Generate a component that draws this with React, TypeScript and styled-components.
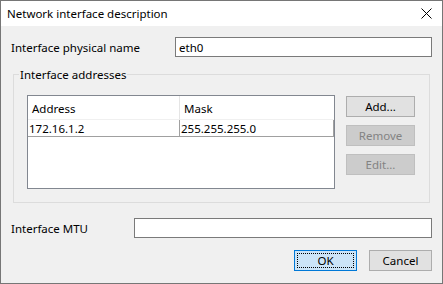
import styled, { createGlobalStyle } from "styled-components";

const GlobalStyle = createGlobalStyle`
    html, body {
        margin: 0;
        padding: 0;
        background: #f0f0f0;
    }
    * {
        box-sizing: border-box;
    }
`;

const Window = styled.div`
    width: 443px;
    height: 284px;
    border: 1px solid #767676;
    background: #f0f0f0;
    display: flex;
    flex-direction: column;
    font-family: "Noto Sans", "Open Sans", sans-serif;
    font-size: 11.5px;
    color: #000;
`;

const TitleBar = styled.div`
    height: 25px;
    background: #fff;
    display: flex;
    align-items: center;
    justify-content: space-between;
    padding: 0 10px 0 6px;
`;

const Title = styled.span`
    font-size: 11.5px;
`;

const Body = styled.div`
    flex: 1;
    display: flex;
    flex-direction: column;
    padding: 11px 10px 0 10px;
`;

const FieldRow = styled.div<{ $labelWidth: number; $top?: number }>`
    display: grid;
    grid-template-columns: ${(p) => p.$labelWidth}px 1fr;
    align-items: center;
    margin-top: ${(p) => p.$top ?? 0}px;
`;

const Label = styled.label``;

const TextInput = styled.input`
    height: 20px;
    border: 1px solid #7a7a7a;
    background: #fff;
    font: inherit;
    padding: 0 3px;
    outline: none;
`;

const Group = styled.fieldset`
    margin: 10px 2px 0 2px;
    border: 1px solid #dcdcdc;
    padding: 13px 13px 13px 13px;
    min-width: 0;
    display: flex;
    align-items: flex-start;
`;

const Legend = styled.legend`
    padding: 0 1px;
    margin-left: -8px;
`;

const ListView = styled.div`
    width: 308px;
    height: 94px;
    border: 1px solid #828790;
    background: #fff;
`;

const Columns = styled.div`
    display: grid;
    grid-template-columns: 152px 154px;
`;

const HeaderCell = styled.div<{ $last?: boolean }>`
    height: 24px;
    line-height: 25px;
    padding-left: 4px;
    border-right: 1px solid ${(p) => (p.$last ? "transparent" : "#e5e5e5")};
    border-bottom: 1px solid #f0f0f0;
`;

const Cell = styled.div`
    height: 17px;
    line-height: 17px;
    padding-left: 1px;
    border-right: 1px solid #a0a0a0;
    border-bottom: 1px solid #a0a0a0;
    white-space: nowrap;
`;

const SideButtons = styled.div`
    display: flex;
    flex-direction: column;
    gap: 8px;
    margin-left: 11px;
    padding-top: 1px;
`;

const Button = styled.button<{ $primary?: boolean }>`
    width: ${(p) => (p.$primary !== undefined ? 63 : 69)}px;
    height: 21px;
    padding: 0;
    font: inherit;
    color: #000;
    background: ${(p) => (p.$primary ? "#cce4f7" : "#e1e1e1")};
    border: 1px solid ${(p) => (p.$primary ? "#0078d7" : "#adadad")};
    position: relative;
    outline: none;

    &:disabled {
        background: #cccccc;
        border-color: #bfbfbf;
        color: #838383;
    }
`;

const FocusRing = styled.span`
    position: absolute;
    inset: 2px;
    border: 1px dotted #000;
`;

const ButtonLabel = styled.span`
    position: relative;
`;

const Footer = styled.div`
    display: flex;
    justify-content: flex-end;
    gap: 12px;
    margin-top: 12px;
`;

const CloseIcon = () => (
    <svg width="11" height="11" viewBox="0 0 11 11">
        <path d="M0.5 0.5 L10.5 10.5 M10.5 0.5 L0.5 10.5" stroke="#000" strokeWidth="1" />
    </svg>
);

export default function App() {
    return (
        <>
            <GlobalStyle />
            <Window>
                <TitleBar>
                    <Title>Network interface description</Title>
                    <CloseIcon />
                </TitleBar>
                <Body>
                    <FieldRow $labelWidth={164}>
                        <Label>Interface physical name</Label>
                        <TextInput defaultValue="eth0" />
                    </FieldRow>
                    <Group>
                        <Legend>Interface addresses</Legend>
                        <ListView>
                            <Columns>
                                <HeaderCell>Address</HeaderCell>
                                <HeaderCell $last>Mask</HeaderCell>
                                <Cell>172.16.1.2</Cell>
                                <Cell>255.255.255.0</Cell>
                            </Columns>
                        </ListView>
                        <SideButtons>
                            <Button>Add...</Button>
                            <Button disabled>Remove</Button>
                            <Button disabled>Edit...</Button>
                        </SideButtons>
                    </Group>
                    <FieldRow $labelWidth={123} $top={15}>
                        <Label>Interface MTU</Label>
                        <TextInput />
                    </FieldRow>
                    <Footer>
                        <Button $primary>
                            <FocusRing />
                            <ButtonLabel>OK</ButtonLabel>
                        </Button>
                        <Button $primary={false}>Cancel</Button>
                    </Footer>
                </Body>
            </Window>
        </>
    );
}
